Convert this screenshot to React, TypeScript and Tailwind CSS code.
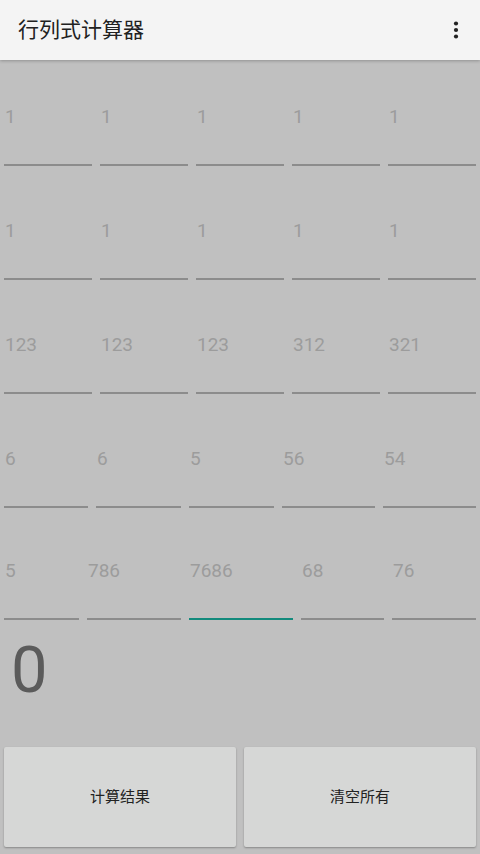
import React from "react";

type Cell = { v: string; w: number; focus?: boolean };

const rows: Cell[][] = [
  [96, 96, 96, 96, 96].map((w) => ({ v: "1", w })),
  [96, 96, 96, 96, 96].map((w) => ({ v: "1", w })),
  [
    { v: "123", w: 96 },
    { v: "123", w: 96 },
    { v: "123", w: 96 },
    { v: "312", w: 96 },
    { v: "321", w: 96 },
  ],
  [
    { v: "6", w: 92 },
    { v: "6", w: 93 },
    { v: "5", w: 93 },
    { v: "56", w: 101 },
    { v: "54", w: 101 },
  ],
  [
    { v: "5", w: 83 },
    { v: "786", w: 102 },
    { v: "7686", w: 112, focus: true },
    { v: "68", w: 91 },
    { v: "76", w: 92 },
  ],
];

const cjk = { fontFamily: "Roboto, 'Noto Sans CJK SC', sans-serif" };

function Field({ cell, last }: { cell: Cell; last: boolean }) {
  return (
    <div
      className={`flex flex-col px-1 ${last ? "pt-[44px] pb-[10px]" : "pt-[46px] pb-2"}`}
      style={{ width: cell.w }}
    >
      <span className="pl-px text-[19px] leading-[22px] text-[#9c9c9c]">{cell.v}</span>
      <div className={`mt-auto h-[2px] ${cell.focus ? "bg-[#138a7c]" : "bg-[#8c8c8c]"}`} />
    </div>
  );
}

export default function App() {
  return (
    <div className="flex h-[854px] w-[480px] flex-col overflow-hidden bg-[#c0c0c0]" style={cjk}>
      <header className="relative z-10 flex h-[60px] shrink-0 items-center justify-between bg-[#f4f4f4] pl-[18px] pr-[16px] shadow-[0_1px_3px_rgba(0,0,0,0.25)]">
        <h1 className="pt-px text-[21px] font-normal text-[#212121]">行列式计算器</h1>
        <svg width="8" height="20" viewBox="0 0 8 20" className="mr-[4px]">
          <circle cx="4" cy="3.5" r="2.1" fill="#222" />
          <circle cx="4" cy="10" r="2.1" fill="#222" />
          <circle cx="4" cy="16.5" r="2.1" fill="#222" />
        </svg>
      </header>

      <main className="flex flex-col">
        {rows.map((row, i) => (
          <div key={i} className="flex h-[114px]">
            {row.map((c, j) => (
              <Field key={j} cell={c} last={i === rows.length - 1} />
            ))}
          </div>
        ))}
        <div className="pl-[11px] pt-[2px] text-[65px] leading-[76px] text-[#5b5b5b]">0</div>
      </main>

      <footer className="mt-auto flex gap-2 px-1 pb-[7px]">
        <button className="flex h-[100px] flex-1 items-center justify-center rounded-[2px] bg-[#d6d7d6] text-[15px] text-[#222] shadow-[0_1px_2px_rgba(0,0,0,0.3)]">
          计算结果
        </button>
        <button className="flex h-[100px] flex-1 items-center justify-center rounded-[2px] bg-[#d6d7d6] text-[15px] text-[#222] shadow-[0_1px_2px_rgba(0,0,0,0.3)]">
          清空所有
        </button>
      </footer>
    </div>
  );
}
